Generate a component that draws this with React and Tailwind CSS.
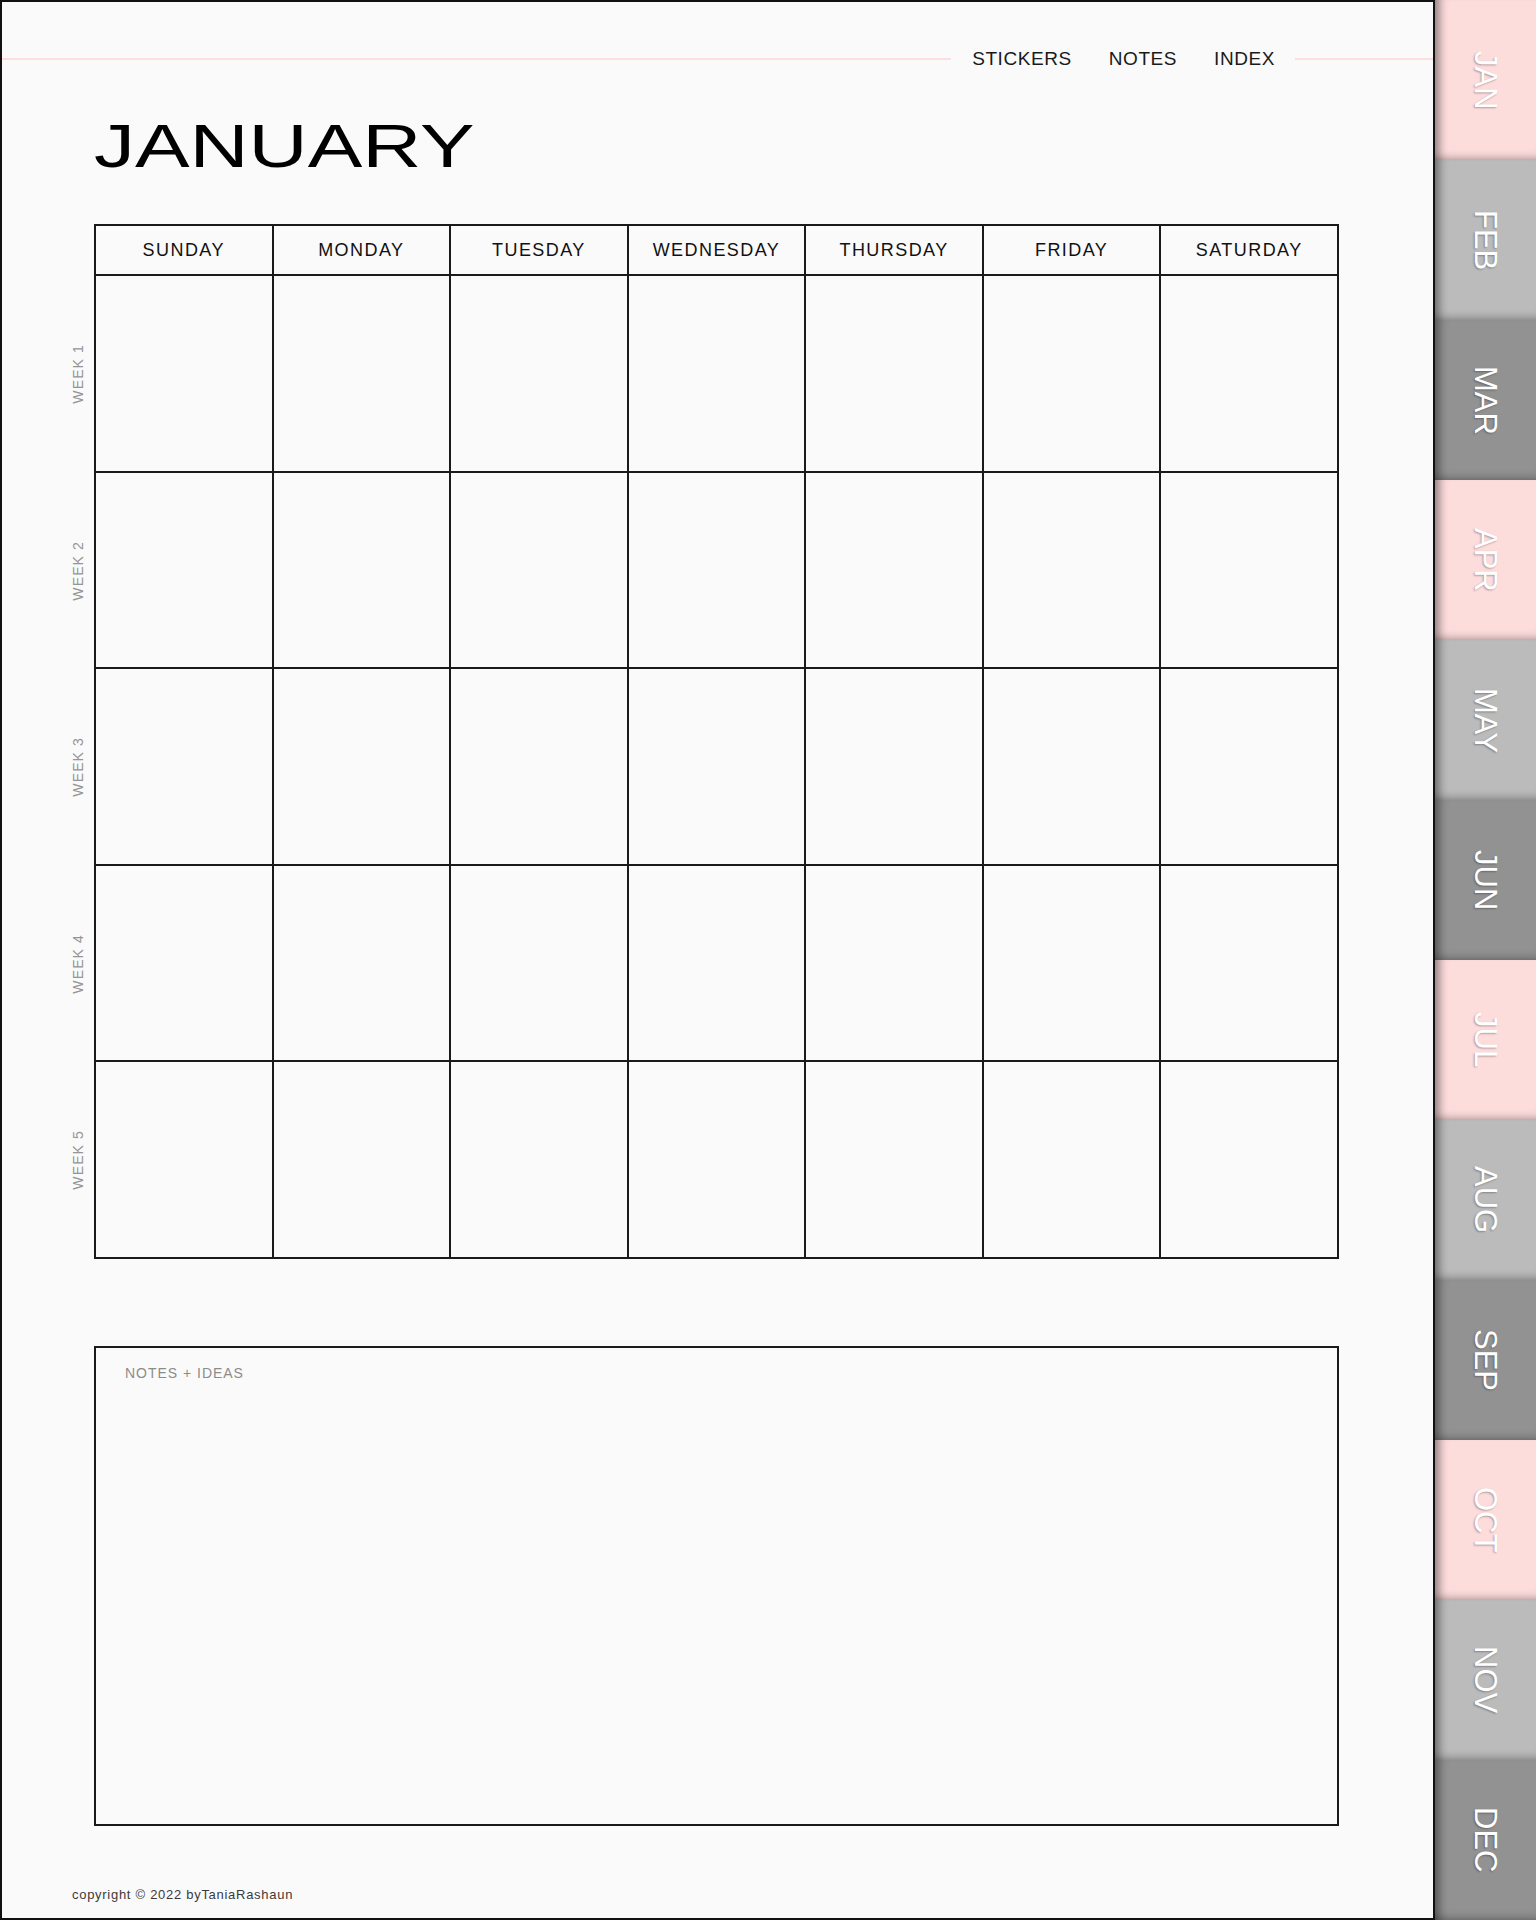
const days = ["SUNDAY", "MONDAY", "TUESDAY", "WEDNESDAY", "THURSDAY", "FRIDAY", "SATURDAY"];
const weeks = ["WEEK 1", "WEEK 2", "WEEK 3", "WEEK 4", "WEEK 5"];

const tabs = [
  { label: "JAN", bg: "bg-[#fddcdc]" },
  { label: "FEB", bg: "bg-[#bbbbbb]" },
  { label: "MAR", bg: "bg-[#939292]" },
  { label: "APR", bg: "bg-[#fddcdc]" },
  { label: "MAY", bg: "bg-[#bbbbbb]" },
  { label: "JUN", bg: "bg-[#939292]" },
  { label: "JUL", bg: "bg-[#fddcdc]" },
  { label: "AUG", bg: "bg-[#bbbbbb]" },
  { label: "SEP", bg: "bg-[#939292]" },
  { label: "OCT", bg: "bg-[#fddcdc]" },
  { label: "NOV", bg: "bg-[#bbbbbb]" },
  { label: "DEC", bg: "bg-[#939292]" },
];

function MonthTab({ label, bg }) {
  return (
    <div
      className={`flex h-[160px] items-center justify-center ${bg} shadow-[inset_12px_0_10px_-8px_rgba(0,0,0,0.45),inset_0_-10px_8px_-8px_rgba(0,0,0,0.3)]`}
    >
      <span className="text-[31px] leading-none text-white [writing-mode:vertical-rl] [text-shadow:1px_1px_2px_rgba(0,0,0,0.3)]">
        {label}
      </span>
    </div>
  );
}

export default function App() {
  return (
    <div className="flex h-[1920px] w-[1536px] bg-[#fafafa] font-['Liberation_Sans',Arial,sans-serif]">
      <div className="flex h-full w-[1435px] flex-col border-2 border-[#111]">
        {/* top nav */}
        <div className="mt-[38px] flex h-[38px] items-center">
          <div className="h-[2px] flex-1 bg-[#fcdede]" />
          <nav className="ml-[21px] mr-[20px] flex items-center gap-[37px] text-[19px] tracking-[0.03em] text-[#1a1a1a]">
            <span>STICKERS</span>
            <span>NOTES</span>
            <span>INDEX</span>
          </nav>
          <div className="h-[2px] w-[138px] bg-[#fcdede]" />
        </div>

        <h1 className="ml-[92px] mt-[37px] text-[62px] font-normal leading-none text-black">
          <span className="inline-block origin-left scale-x-[1.32]">JANUARY</span>
        </h1>

        {/* calendar */}
        <div className="mt-[47px] flex">
          <div className="w-[92px] pt-[52px]">
            {weeks.map((w) => (
              <div key={w} className="flex h-[196.5px] items-center justify-end pr-[9px]">
                <span className="rotate-180 text-[14px] leading-none tracking-[0.08em] text-[#959595] [writing-mode:vertical-rl]">
                  {w}
                </span>
              </div>
            ))}
          </div>
          <div className="grid w-[1245px] grid-cols-7 border-l-2 border-t-2 border-[#1a1a1a]">
            {days.map((d) => (
              <div
                key={d}
                className="flex h-[50px] items-center justify-center border-b-2 border-r-2 border-[#1a1a1a] text-[18px] tracking-[0.08em] text-[#111]"
              >
                {d}
              </div>
            ))}
            {Array.from({ length: 35 }).map((_, i) => (
              <div key={i} className="h-[196.5px] border-b-2 border-r-2 border-[#1a1a1a]" />
            ))}
          </div>
        </div>

        {/* notes */}
        <div className="ml-[92px] mt-[87px] h-[480px] w-[1245px] border-2 border-[#1a1a1a] pl-[29px] pt-[18px]">
          <p className="text-[14px] leading-none tracking-[0.07em] text-[#8c8c8c]">NOTES + IDEAS</p>
        </div>

        <p className="ml-[70px] mt-[62px] text-[13px] leading-none tracking-[0.055em] text-[#3a3a3a]">
          copyright © 2022 byTaniaRashaun
        </p>
      </div>

      {/* month tabs */}
      <div className="flex w-[101px] flex-col">
        {tabs.map((t) => (
          <MonthTab key={t.label} {...t} />
        ))}
      </div>
    </div>
  );
}
